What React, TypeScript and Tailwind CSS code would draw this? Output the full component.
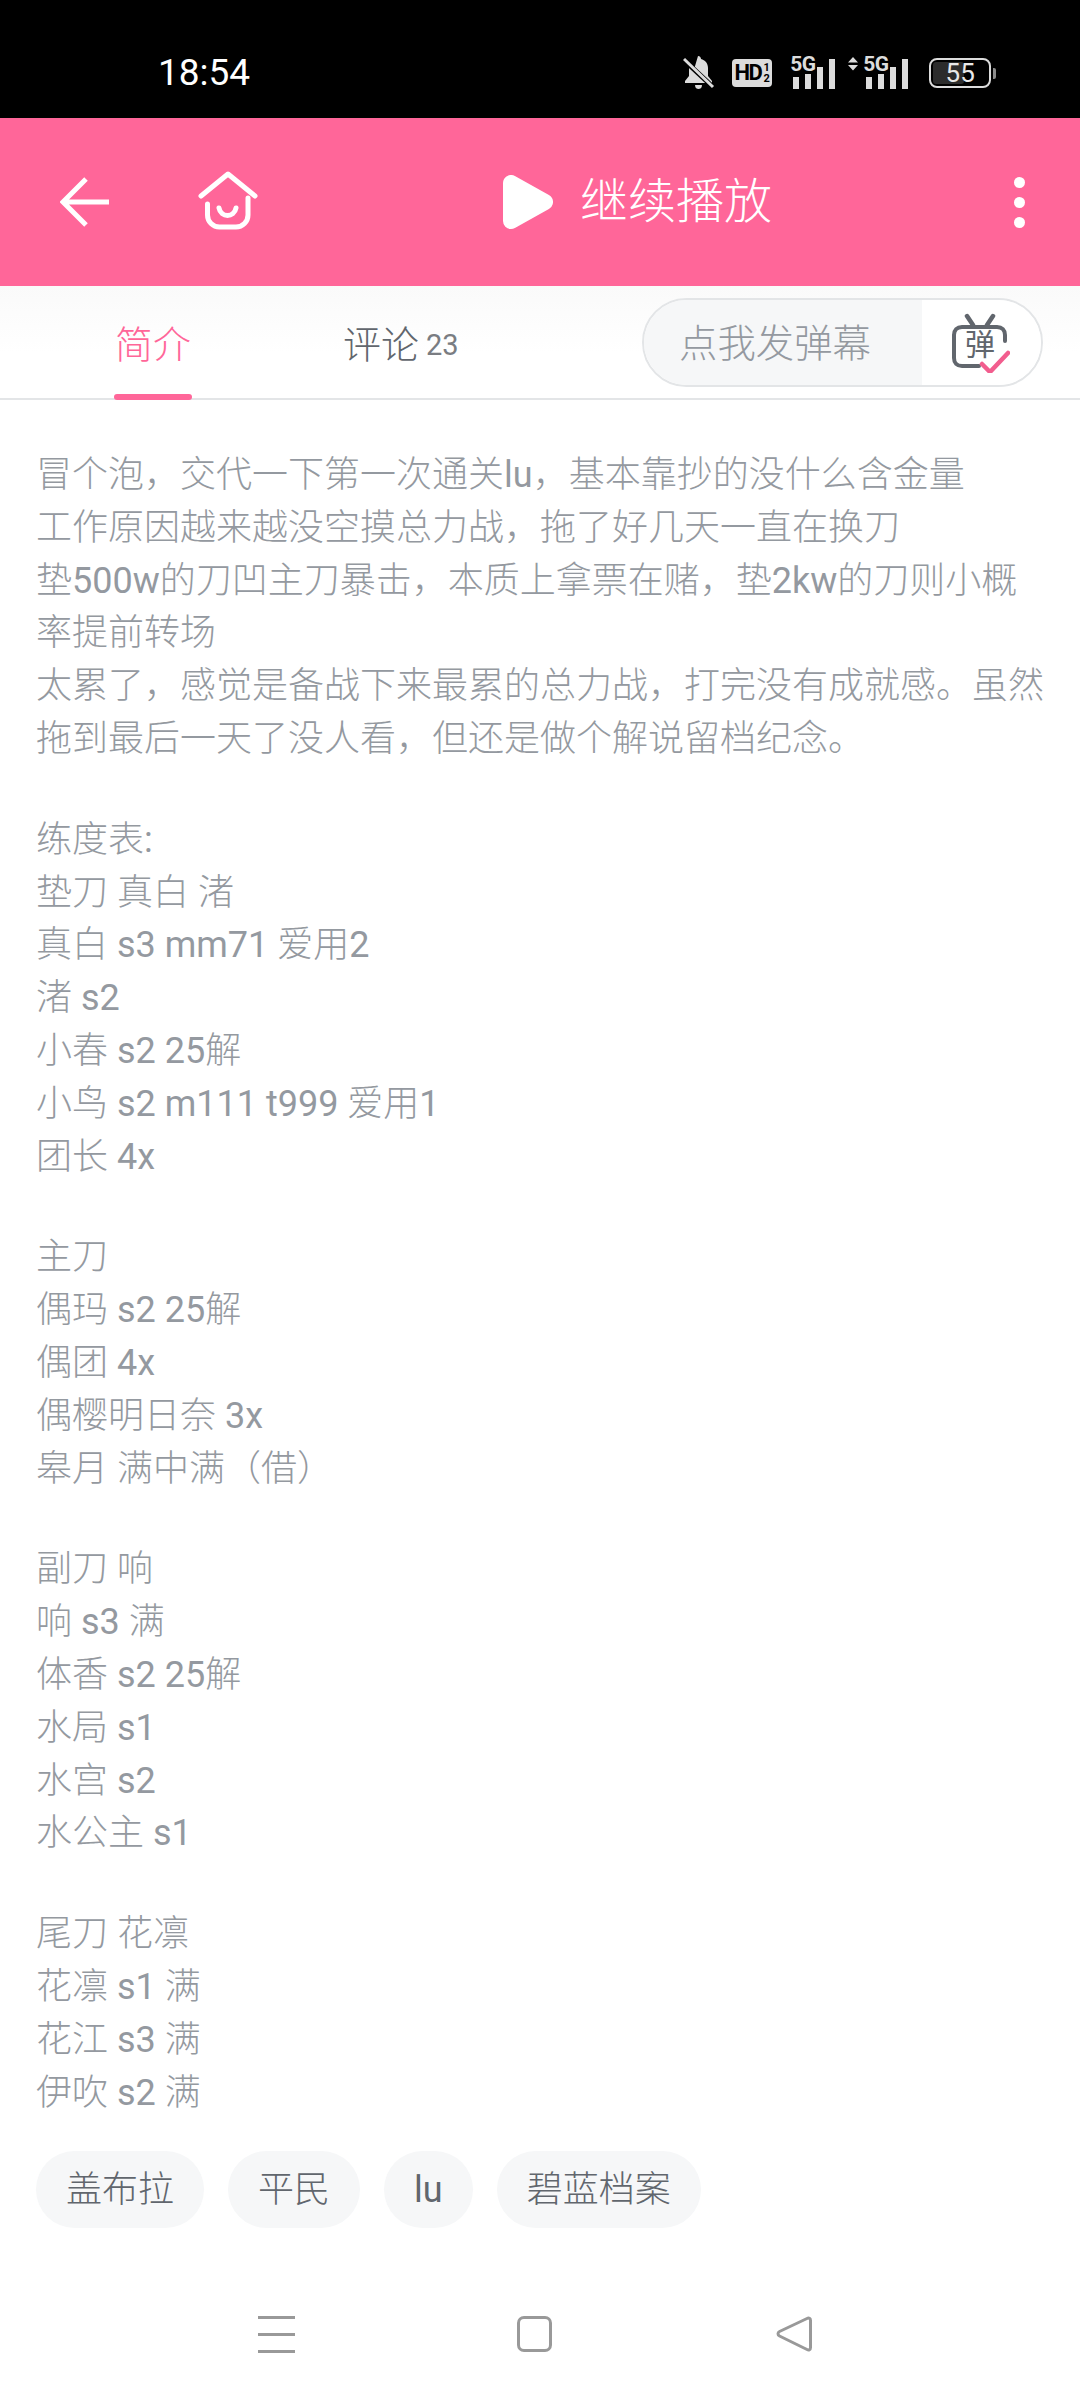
const sans = "font-['Roboto','Noto_Sans_CJK_SC',sans-serif]";

const sections = [
  [
    "冒个泡，交代一下第一次通关lu，基本靠抄的没什么含金量",
    "工作原因越来越没空摸总力战，拖了好几天一直在换刀",
    "垫500w的刀凹主刀暴击，本质上拿票在赌，垫2kw的刀则小概率提前转场",
    "太累了，感觉是备战下来最累的总力战，打完没有成就感。虽然拖到最后一天了没人看，但还是做个解说留档纪念。",
  ],
  ["练度表:", "垫刀 真白 渚", "真白 s3 mm71 爱用2", "渚 s2", "小春 s2 25解", "小鸟 s2 m111 t999 爱用1", "团长 4x"],
  ["主刀", "偶玛 s2 25解", "偶团 4x", "偶樱明日奈 3x", "皋月 满中满（借）"],
  ["副刀 响", "响 s3 满", "体香 s2 25解", "水局 s1", "水宫 s2", "水公主 s1"],
  ["尾刀 花凛", "花凛 s1 满", "花江 s3 满", "伊吹 s2 满"],
];

const tags = ["盖布拉", "平民", "lu", "碧蓝档案"];

// latin runs stay regular, the CJK around them is light
function Mixed({ text }: { text: string }) {
  return (
    <>
      {text.split(/([\x20-\x7e]+)/).map((part, i) =>
        i % 2 ? (
          <span key={i} className="font-normal">
            {part}
          </span>
        ) : (
          part
        ),
      )}
    </>
  );
}

function Signal({ arrows }: { arrows?: boolean }) {
  return (
    <div className="relative h-[32px] w-[46px]">
      <span className="absolute left-[-3px] top-[-3px] text-[21px] font-bold leading-[20px] tracking-[-0.5px] text-[#dcdcdc]">5G</span>
      <div className="absolute bottom-0 left-0 flex items-end gap-[6px]">
        <div className="h-[12px] w-[6px] bg-[#dcdcdc]" />
        <div className="h-[15px] w-[6px] bg-[#dcdcdc]" />
        <div className="h-[22px] w-[6px] bg-[#dcdcdc]" />
        <div className="h-[30px] w-[6px] bg-[#dcdcdc]" />
      </div>
      {arrows && (
        <svg className="absolute left-[-18px] top-0" width="10" height="14" viewBox="0 0 10 14" fill="#dcdcdc">
          <path d="M5 0l5 5.500H0zM0 8h10l-5 5.500z" />
        </svg>
      )}
    </div>
  );
}

function StatusBar() {
  return (
    <div className="flex h-[118px] shrink-0 items-center bg-black pl-[158px] pt-[27px]">
      <span className="text-[37px] leading-none text-white">18:54</span>
      <div className="ml-[433px] flex items-center">
        <svg width="32" height="34" viewBox="0 0 32 34" fill="#dcdcdc">
          <path d="M15 0c2 0 3 1.500 3 3 4 1 7 4 7 9v8l4 5v2H2v-2l4-5v-8c0-1 0-2 .5-3L22 27H7z" />
          <path d="M12 29h7c0 3-2 4-3.500 4S12 32 12 29z" />
          <path d="M1 4l29 27" stroke="#000" strokeWidth="5" />
          <path d="M1 3l29 28" stroke="#dcdcdc" strokeWidth="3" />
        </svg>
        <div className="ml-[17px] flex h-[28px] w-[40px] items-center justify-center rounded-[4px] bg-[#dcdcdc] text-black">
          <span className="text-[22px] font-bold leading-none tracking-[-1.5px]">HD</span>
          <span className="ml-[2px] flex flex-col text-[11px] font-bold leading-[11px]">
            <span>1</span>
            <span>2</span>
          </span>
        </div>
        <div className="ml-[21px]">
          <Signal />
        </div>
        <div className="ml-[27px]">
          <Signal arrows />
        </div>
        <div className="relative ml-[17px] flex h-[30px] w-[62px] items-center justify-center rounded-[8px] border-2 border-[#dcdcdc]">
          <div className="absolute bottom-[2px] left-[2px] top-[2px] w-[31px] rounded-[3px] bg-[#2c2c2c]" />
          <span className="relative text-[26px] leading-none text-[#e8e8e8]">55</span>
          <div className="absolute right-[-7px] top-[8px] h-[11px] w-[3px] rounded-r-[2px] bg-[#8a8a8a]" />
        </div>
      </div>
    </div>
  );
}

function Header() {
  return (
    <div className="flex h-[168px] shrink-0 items-center bg-[#ff6699] text-white">
      <svg className="ml-[60px]" width="50" height="50" viewBox="0 0 50 50" fill="none" stroke="#fff" strokeWidth="5">
        <path d="M26 2L3 25l23 23M3 25h46" />
      </svg>
      <svg className="ml-[88px] mb-[2px]" width="60" height="60" viewBox="0 0 60 60" fill="none" stroke="#fff" strokeWidth="5" strokeLinecap="round" strokeLinejoin="round">
        <path d="M3 25L30 3l27 22" />
        <path d="M9.500 33v11a12 12 0 0 0 12 12H38a12 12 0 0 0 12-12V27" />
        <path d="M21 37c2 10 15 10 17 0" />
      </svg>
      <svg className="ml-[245px]" width="50" height="54" viewBox="0 0 50 54" fill="#fff" stroke="#fff" strokeWidth="16" strokeLinejoin="round">
        <path d="M8 8v38l34-19z" />
      </svg>
      <span className="ml-[27px] text-[48px] font-light leading-none">继续播放</span>
      <div className="ml-auto mr-[55px] flex flex-col gap-[9px]">
        <div className="h-[11px] w-[11px] rounded-full bg-white" />
        <div className="h-[11px] w-[11px] rounded-full bg-white" />
        <div className="h-[11px] w-[11px] rounded-full bg-white" />
      </div>
    </div>
  );
}

function DanmakuIcon() {
  return (
    <div className="relative h-[60px] w-[60px]">
      <svg className="absolute inset-0" width="60" height="60" viewBox="0 0 60 60" fill="none">
        <path d="M17 3l6 9M43 3l-6 9" stroke="#61666d" strokeWidth="4.500" strokeLinecap="round" />
        <path d="M55 28v-6c0-5-3-8-8-8H12c-5 0-8 3-8 8v23c0 5 3 8 8 8h17" stroke="#61666d" strokeWidth="4" strokeLinecap="round" />
        <path d="M32 51l8 8 18-19" stroke="#f25d8e" strokeWidth="4.500" strokeLinecap="round" strokeLinejoin="round" />
      </svg>
      <span className="absolute left-[15px] top-[16px] text-[30px] leading-[32px] text-[#61666d]">弹</span>
    </div>
  );
}

function Tabs() {
  return (
    <div className="flex h-[114px] shrink-0 items-start border-b-2 border-[#e3e5e7] bg-gradient-to-b from-[#fafafa] to-white to-60%">
      <div className="relative ml-[114px] mt-[36px] w-[78px] text-center text-[38px] font-light leading-[46px] text-[#ff6699]">
        简介
        <div className="absolute left-0 top-[72px] h-[6px] w-[78px] rounded-[3px] bg-[#ff6699]" />
      </div>
      <div className="ml-[151px] mt-[36px] flex items-center text-[#61666d]">
        <span className="text-[38px] font-light leading-[46px]">评论</span>
        <span className="ml-[7px] text-[29px] leading-[46px] text-[#7a7d82]">23</span>
      </div>
      <div className="ml-auto mr-[37px] mt-[12px] flex h-[89px] w-[401px] overflow-hidden rounded-full border-2 border-[#e3e5e7]">
        <div className="flex w-[278px] items-center bg-[#f6f7f8] pl-[35px] pt-[2px] text-[38.400px] font-light text-[#9499a0]">点我发弹幕</div>
        <div className="flex flex-1 items-center bg-white pl-[28px]">
          <DanmakuIcon />
        </div>
      </div>
    </div>
  );
}

function NavBar() {
  return (
    <div className="flex h-[172px] shrink-0 items-start pl-[258px] pt-[88px]">
      <div className="flex h-[37px] w-[37px] flex-col justify-between">
        <div className="h-[3px] bg-[#999]" />
        <div className="h-[3px] bg-[#999]" />
        <div className="h-[3px] bg-[#999]" />
      </div>
      <div className="ml-[222px] h-[36px] w-[35px] rounded-[7px] border-[3px] border-[#999]" />
      <svg className="ml-[223px]" width="38" height="38" viewBox="0 0 38 38" fill="none" stroke="#999" strokeWidth="3" strokeLinejoin="round" strokeLinecap="round">
        <path d="M4.500 15.500L32 2.500c2-1 3.500 0 3.500 2v27c0 2-1.500 3-3.500 2L4.500 20c-2-1-2-3.500 0-4.500z" />
      </svg>
    </div>
  );
}

export default function App() {
  return (
    <div className={`flex h-[2400px] w-[1080px] flex-col overflow-hidden bg-white ${sans}`}>
      <StatusBar />
      <Header />
      <Tabs />
      <div className="min-h-0 flex-1 px-[36px] pt-[49px]">
        <div className="text-[36px] font-light leading-[52.800px] text-[#9499a0]">
          {sections.map((lines, i) => (
            <div key={i} className="mb-[48px] last:mb-0">
              {lines.map((line, j) => (
                <p key={j}>
                  <Mixed text={line} />
                </p>
              ))}
            </div>
          ))}
        </div>
        <div className="mt-[32px] flex gap-[24px]">
          {tags.map((t) => (
            <span key={t} className="flex h-[77px] items-center rounded-full bg-[#f6f7f8] px-[30px] text-[36px] font-light text-[#61666d]">
              <Mixed text={t} />
            </span>
          ))}
        </div>
      </div>
      <NavBar />
    </div>
  );
}
